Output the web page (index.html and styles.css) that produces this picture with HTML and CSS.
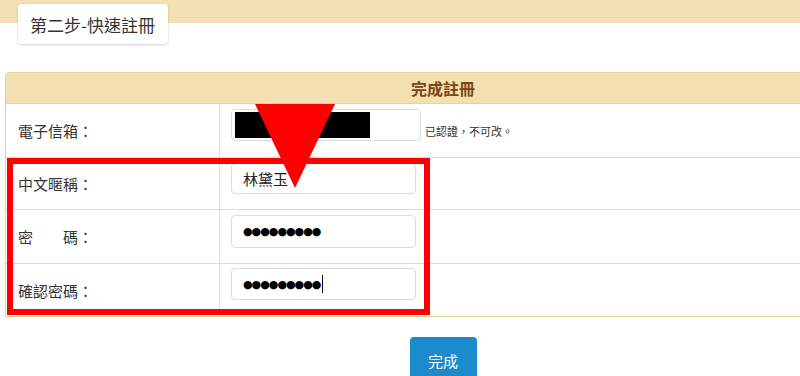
FILE: index.html
```html
<!DOCTYPE html>
<html lang="zh-Hant">
<head>
<meta charset="utf-8">
<title>第二步-快速註冊</title>
<link rel="stylesheet" href="styles.css">
</head>
<body>
<div class="page">
  <div class="band">
    <div class="tab">第二步-快速註冊</div>
  </div>
  <div class="form-wrap">
    <table class="reg">
      <colgroup><col class="c-label"><col class="c-val"></colgroup>
      <thead>
        <tr><th colspan="2">完成註冊</th></tr>
      </thead>
      <tbody>
        <tr class="r1">
          <td class="label">電子信箱：</td>
          <td class="val"><span class="field email"><span class="redact"></span></span><span class="note">已認證，不可改。</span></td>
        </tr>
        <tr class="r2">
          <td class="label">中文暱稱：</td>
          <td class="val"><span class="field">林黛玉</span></td>
        </tr>
        <tr class="r3">
          <td class="label">密　　碼：</td>
          <td class="val"><span class="field pw">●●●●●●●●●</span></td>
        </tr>
        <tr class="r4">
          <td class="label">確認密碼：</td>
          <td class="val"><span class="field pw">●●●●●●●●●<span class="caret"></span></span></td>
        </tr>
      </tbody>
    </table>
    <div class="actions"><button class="btn" type="button">完成</button></div>
  </div>
  <div class="highlight"></div>
  <svg class="arrow" width="80" height="84" viewBox="0 0 80 84"><polygon points="0,0 80,0 40,84" fill="#ff0000"/></svg>
</div>
</body>
</html>
```

FILE: styles.css
```css
html, body {
  margin: 0;
  padding: 0;
  overflow: hidden;
  background: #fff;
}
body {
  font-family: "Noto Sans CJK TC", "Noto Sans", sans-serif;
  color: #333;
}
.page {
  position: relative;
  width: 800px;
  height: 376px;
  overflow: hidden;
}
.band {
  height: 23px;
  background: #f3e0b4;
  padding: 4px 0 0 18px;
  box-sizing: border-box;
}
.tab {
  display: inline-flex;
  align-items: center;
  height: 40px;
  width: 150px;
  box-sizing: border-box;
  padding-left: 12px;
  background: #fff;
  border-radius: 4px;
  box-shadow: 0 1px 3px rgba(0,0,0,0.18);
  font-size: 17px;
  color: #333;
  position: relative;
}
.form-wrap {
  margin: 49px 0 0 5px;
  width: 876px;
}
.reg {
  width: 876px;
  border-collapse: separate;
  border-spacing: 0;
  border: 1px solid #e6d3a0;
  border-radius: 4px 4px 0 0;
  table-layout: fixed;
}
.c-label { width: 214px; }
.reg th {
  height: 30px;
  padding: 0;
  background: #f3dfb0;
  color: #7a4510;
  font-size: 16px;
  font-weight: bold;
  text-align: center;
  border-bottom: 1px solid #e6d3a0;
  border-radius: 3px 3px 0 0;
}
.reg td {
  padding: 0;
  border-bottom: 1px solid #ecdcae;
  font-size: 15px;
}
.reg tr.r4 td { border-bottom: none; }
.reg td.label {
  padding-left: 12px;
  border-right: 1px solid #ecdcae;
  color: #333;
}
.reg td.val {
  padding-left: 11px;
  padding-top: 5px;
  vertical-align: top;
  box-sizing: border-box;
}
.reg tr.r4 td.val { padding-top: 4px; }
.r1 td { height: 53px; }
.r2 td { height: 51px; }
.r3 td { height: 53px; }
.r4 td { height: 52px; }
.field {
  display: inline-flex;
  align-items: center;
  vertical-align: top;
  box-sizing: border-box;
  width: 185px;
  height: 31px;
  padding-left: 11px;
  border: 1px solid #dcdcdc;
  border-radius: 4px;
  background: #fff;
  font-size: 15px;
  color: #222;
}
.r3 .field { height: 33px; }
.r4 .field { height: 32px; }
.field.email {
  width: 190px;
  height: 32px;
  padding-left: 3px;
}
.redact {
  display: block;
  width: 135px;
  height: 26px;
  background: #000;
}
.note {
  display: inline-block;
  vertical-align: top;
  font-size: 11px;
  color: #333;
  margin-left: 4px;
  margin-top: 14px;
}
.pw {
  font-family: "DejaVu Sans", sans-serif;
  font-size: 11px;
  letter-spacing: -1px;
  color: #000;
}
.caret {
  display: inline-block;
  width: 1px;
  height: 18px;
  background: #000;
  margin-left: 2px;
}
.actions {
  text-align: center;
  padding-top: 20px;
}
.btn {
  width: 67px;
  height: 50px;
  border: none;
  border-radius: 4px;
  background: #1b8bcd;
  color: #fff;
  font-family: "Noto Sans CJK TC", sans-serif;
  font-size: 15px;
  padding: 0;
  padding-bottom: 4px;
}
.highlight {
  position: absolute;
  left: 7px;
  top: 158px;
  width: 423px;
  height: 157px;
  box-sizing: border-box;
  border: 6px solid #ff0000;
}
.arrow {
  position: absolute;
  left: 255px;
  top: 104px;
}
```
